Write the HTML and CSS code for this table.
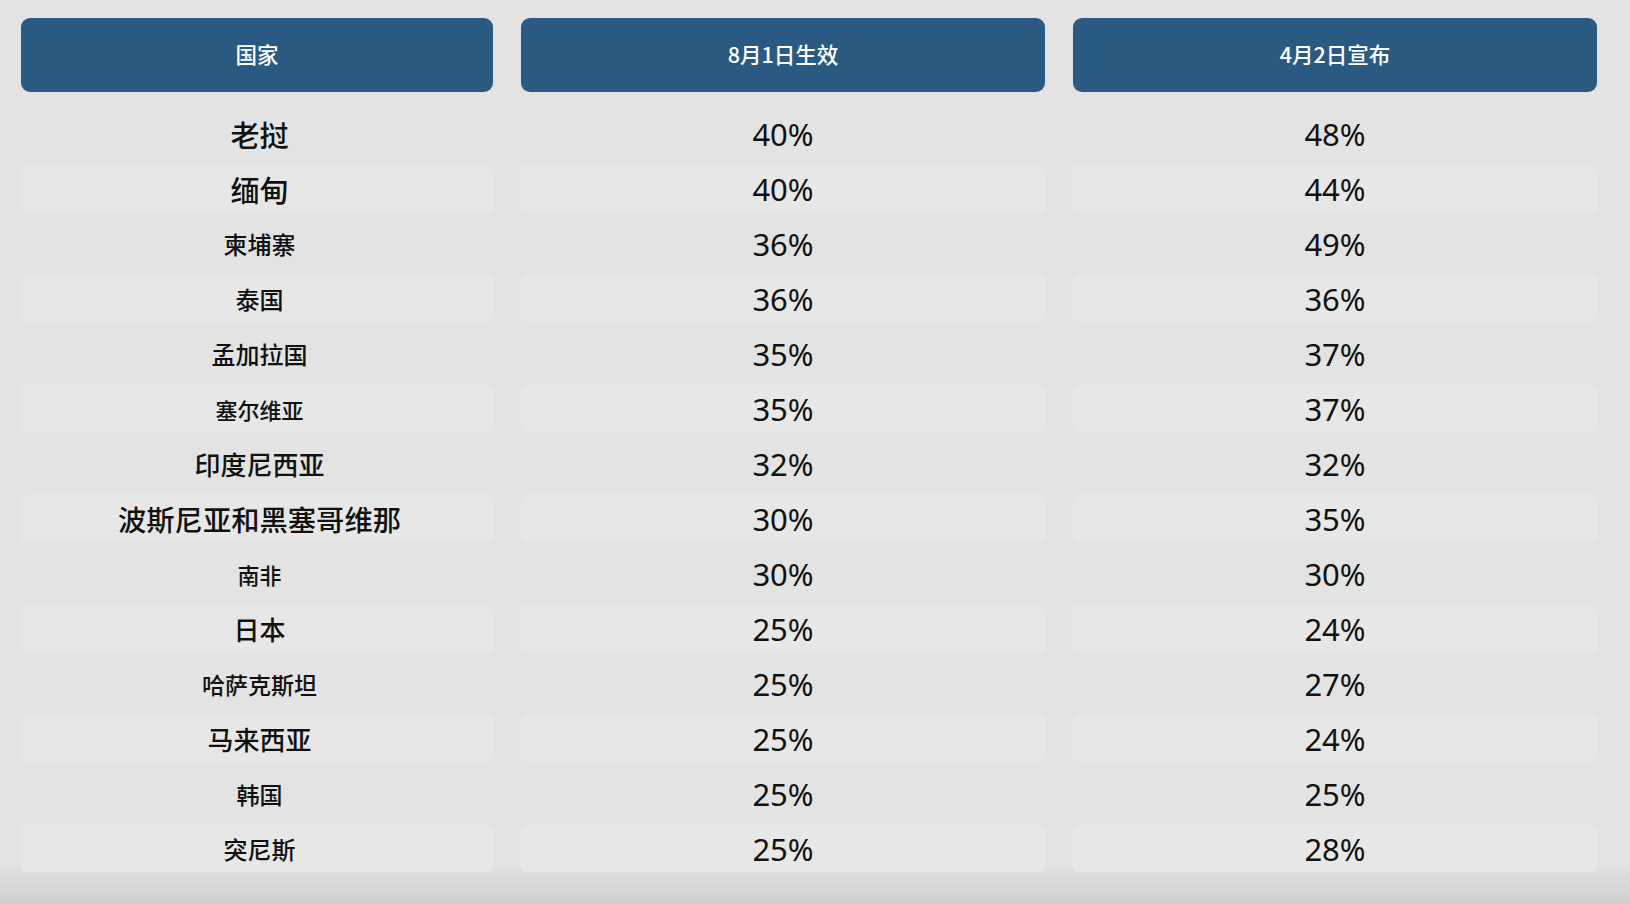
FILE: index.html
```html
<!DOCTYPE html>
<html lang="zh">
<head>
<meta charset="utf-8">
<title>关税表</title>
<link rel="stylesheet" href="styles.css">
</head>
<body>
<div class="table">
  <div class="head">国家</div>
  <div class="head">8月1日生效</div>
  <div class="head">4月2日宣布</div>

  <div class="cell name s30">老挝</div><div class="cell pct">40%</div><div class="cell pct">48%</div>
  <div class="cell name s29 alt">缅甸</div><div class="cell pct alt">40%</div><div class="cell pct alt">44%</div>
  <div class="cell name s25">柬埔寨</div><div class="cell pct">36%</div><div class="cell pct">49%</div>
  <div class="cell name s25 alt">泰国</div><div class="cell pct alt">36%</div><div class="cell pct alt">36%</div>
  <div class="cell name s25">孟加拉国</div><div class="cell pct">35%</div><div class="cell pct">37%</div>
  <div class="cell name s22 alt">塞尔维亚</div><div class="cell pct alt">35%</div><div class="cell pct alt">37%</div>
  <div class="cell name s26">印度尼西亚</div><div class="cell pct">32%</div><div class="cell pct">32%</div>
  <div class="cell name s28 alt">波斯尼亚和黑塞哥维那</div><div class="cell pct alt">30%</div><div class="cell pct alt">35%</div>
  <div class="cell name s22">南非</div><div class="cell pct">30%</div><div class="cell pct">30%</div>
  <div class="cell name s26 alt">日本</div><div class="cell pct alt">25%</div><div class="cell pct alt">24%</div>
  <div class="cell name s23">哈萨克斯坦</div><div class="cell pct">25%</div><div class="cell pct">27%</div>
  <div class="cell name s26 alt">马来西亚</div><div class="cell pct alt">25%</div><div class="cell pct alt">24%</div>
  <div class="cell name s23">韩国</div><div class="cell pct">25%</div><div class="cell pct">25%</div>
  <div class="cell name s25 alt">突尼斯</div><div class="cell pct alt">25%</div><div class="cell pct alt">28%</div>
</div>
</body>
</html>
```

FILE: styles.css
```css
html {
  background: linear-gradient(to bottom, #e3e3e3 0, #e3e3e3 862px, #cfcfcf 904px);
  min-height: 904px;
}
body {
  margin: 0;
  padding: 18px 0 0 21px;
  font-family: "Noto Sans", "Noto Sans CJK SC", sans-serif;
  color: #111;
}
.table {
  display: grid;
  grid-template-columns: 472px 524px 524px;
  column-gap: 28px;
  row-gap: 8px;
  grid-template-rows: 84px;
  grid-auto-rows: 47px;
}
.head {
  align-self: start;
  box-sizing: border-box;
  height: 74px;
  padding-bottom: 4px;
  background: #2a5a81;
  border-radius: 9px;
  color: #fff;
  display: flex;
  align-items: center;
  justify-content: center;
  font-family: "Noto Sans CJK SC", sans-serif;
  font-size: 21.5px;
  font-weight: 500;
}
.cell {
  display: flex;
  align-items: center;
  justify-content: center;
  border-radius: 6px;
}
.alt {
  background: #e7e7e7;
  box-shadow: 0 0 2px #e7e7e7;
}
.name {
  font-family: "Noto Sans CJK SC", sans-serif;
  font-weight: 500;
  padding-left: 5px;
}
.pct {
  font-family: "Noto Sans", sans-serif;
  font-size: 31px;
}
.s30 { font-size: 29px; }
.s29 { font-size: 29px; }
.s28 { font-size: 28.3px; }
.s26 { font-size: 26px; }
.s25 { font-size: 24px; }
.s23 { font-size: 23px; }
.s22 { font-size: 22px; }
```
